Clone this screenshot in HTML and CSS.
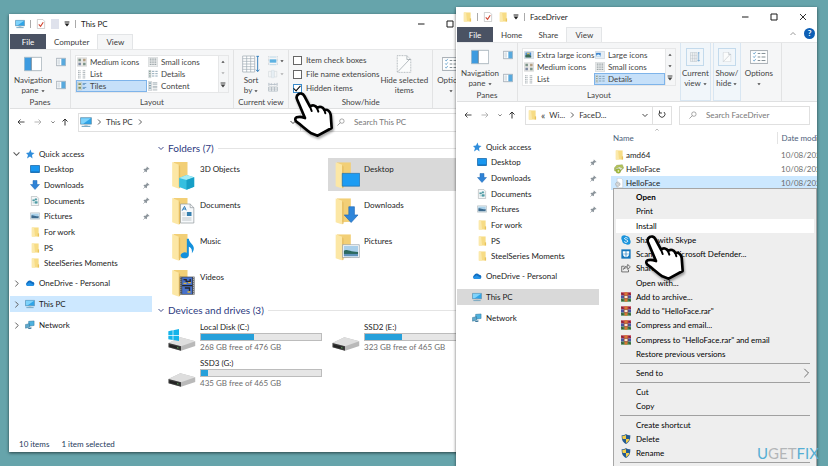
FILE: index.html
```
<!DOCTYPE html>
<html lang="en">
<head>
	<meta charset="UTF-8">
	<title>File Explorer</title>
	<link rel="stylesheet" href="styles.css">
</head>
<body>

<!-- shared icons -->
<svg class="sprite" width="0" height="0" aria-hidden="true">
	<symbol id="i-pc" viewBox="0 0 22 20"><path d="M1 2h20v12H1z" fill="#2fa4e8" stroke="#5f8196"/><path d="M2 3h18L6 13H2z" fill="#7fd3fb"/><path d="M8 14h6v3H8z" fill="#b9c4ca"/><path d="M3 17h16v2H3z" fill="#6fa3bf"/></symbol>
	<symbol id="i-folder" viewBox="0 0 20 22"><path d="M3 1h15v20H3z" fill="#f7dc85"/><path d="M3 1h5l2 20H3z" fill="#fbe9ab"/><path d="M16 14h3v7h-3z" fill="#e9c35c"/></symbol>
	<symbol id="i-check" viewBox="0 0 18 22"><path d="M1 1h12l4 4v16H1z" fill="#fff" stroke="#999"/><path d="M4 12l4 4 6-9" fill="none" stroke="#d0432f" stroke-width="2.4"/></symbol>
	<symbol id="i-star" viewBox="0 0 20 20"><path d="M11 1l2 6 6 1-5 4 1 7-5-4-6 4 2-7-4-4 6-1z" fill="#2f8ddb"/></symbol>
	<symbol id="i-desktop" viewBox="0 0 20 18"><path d="M1 2h18v14H1z" fill="#1997f0" stroke="#1767a8" stroke-width="1.5"/><path d="M2 14h16v2H2z" fill="#0e68b4"/></symbol>
	<symbol id="i-down" viewBox="0 0 20 20"><path d="M6 1h8v8h5l-9 10L1 9h5z" fill="#2f83d6" stroke="#2069b5"/></symbol>
	<symbol id="i-doc" viewBox="0 0 20 22"><path d="M2 1h12l4 4v16H2z" fill="#f4f7f8" stroke="#8d979c"/><path d="M5 8h4v3H5zM5 15h10M10 12h5v4h-5zM10 6h4v3h-4z" fill="#4f9ba5" stroke="#4f9ba5"/></symbol>
	<symbol id="i-pic" viewBox="0 0 22 18"><path d="M1 2h20v14H1z" fill="#e7eff4" stroke="#97a3ab"/><path d="M3 4h16v6H3z" fill="#a9d1ea"/><path d="M3 8c5-2 8 3 16 1v5H3z" fill="#3d6b8e"/></symbol>
	<symbol id="i-cloud" viewBox="0 0 24 16"><path d="M6 15a5 5 0 0 1-1-9 7 7 0 0 1 12-1 5 5 0 0 1 1 10z" fill="#0f6cc0"/><path d="M2 12l9-6 11 7-3 2H6z" fill="#2492e6"/></symbol>
	<symbol id="i-net" viewBox="0 0 22 20"><path d="M8 2l12-1v10l-12 2z" fill="#4fb2df" stroke="#2d6d90"/><path d="M1 9l9-2v8l-9 2z" fill="#5fa9cc" stroke="#2d6d90"/><path d="M7 17l7-2v3l-7 1z" fill="#286a92"/></symbol>
	<symbol id="i-pin" viewBox="0 0 16 16"><path d="M9 1l6 6-2 1-1-1-3 3 0 3-2 1-6-6 2-2h3l3-3-1-1z" fill="#8b949b"/><path d="M5 11l-4 4" stroke="#8b949b" stroke-width="1.6"/></symbol>
	<symbol id="i-back" viewBox="0 0 16 14"><path d="M15 7H2M7 2L2 7l5 5" fill="none" stroke="currentColor" stroke-width="1.8"/></symbol>
	<symbol id="i-fwd" viewBox="0 0 16 14"><path d="M1 7h13M9 2l5 5-5 5" fill="none" stroke="currentColor" stroke-width="1.8"/></symbol>
	<symbol id="i-up" viewBox="0 0 14 16"><path d="M7 15V2M2 7l5-5 5 5" fill="none" stroke="currentColor" stroke-width="2"/></symbol>
	<symbol id="i-cdown" viewBox="0 0 12 12"><path d="M1 4l5 5 5-5" fill="none" stroke="currentColor" stroke-width="1.8"/></symbol>
	<symbol id="i-cup" viewBox="0 0 12 12"><path d="M1 8l5-5 5 5" fill="none" stroke="currentColor" stroke-width="1.5"/></symbol>
	<symbol id="i-cright" viewBox="0 0 12 12"><path d="M4 1l5 5-5 5" fill="none" stroke="currentColor" stroke-width="1.6"/></symbol>
	<symbol id="i-tri" viewBox="0 0 10 10"><path d="M1 3h8L5 8z" fill="currentColor"/></symbol>
	<symbol id="i-triup" viewBox="0 0 10 10"><path d="M1 7h8L5 2z" fill="currentColor"/></symbol>
	<symbol id="i-more" viewBox="0 0 10 10"><path d="M1 1h8v1.500H1zM1 4h8L5 9z" fill="currentColor"/></symbol>
	<symbol id="i-search" viewBox="0 0 18 18"><circle cx="11" cy="7" r="5" fill="none" stroke="currentColor" stroke-width="1.4"/><path d="M7.500 10.500L1 17" stroke="currentColor" stroke-width="1.6"/></symbol>
	<symbol id="i-refresh" viewBox="0 0 16 16"><path d="M12 4a6 6 0 1 1-8 0M3 1v5h5" fill="none" stroke="currentColor" stroke-width="1.8"/></symbol>
	<symbol id="i-min" viewBox="0 0 16 16"><path d="M2 8h13" stroke="currentColor" stroke-width="2"/></symbol>
	<symbol id="i-max" viewBox="0 0 16 16"><path d="M2 2h12v12H2z" fill="none" stroke="currentColor" stroke-width="2"/></symbol>
	<symbol id="i-close" viewBox="0 0 16 16"><path d="M2 2l12 12M14 2L2 14" stroke="currentColor" stroke-width="1.8"/></symbol>
	<symbol id="i-navpane" viewBox="0 0 54 42"><path d="M1 1h52v40H1z" fill="#fff" stroke="#8a98a5" stroke-width="2"/><path d="M2 2h20v38H2z" fill="#3d9be0"/><path d="M22 2v38" stroke="#5f6b75" stroke-width="2"/></symbol>
	<symbol id="i-preview" viewBox="0 0 30 24"><path d="M1 1h28v22H1z" fill="#fff" stroke="#8794a0" stroke-width="2"/><path d="M16 2h12v20H16z" fill="#58a9dd"/><path d="M4 4h8v16H4z" fill="#dce3e8"/></symbol>
	<symbol id="i-large" viewBox="0 0 28 24"><path d="M1 2h26v20H1z" fill="#dde7ef" stroke="#a6b2bd"/><path d="M4 5h16v13H4z" fill="#4789cd"/><path d="M4 13l8-4 8 6v4H4z" fill="#3b6a55"/><path d="M8 6h8v4H8z" fill="#cdbb66"/></symbol>
	<symbol id="i-large2" viewBox="0 0 28 24"><path d="M1 2h26v20H1z" fill="#e6eef5" stroke="#a6b2bd"/><path d="M3 6h13v11H3z" fill="#3f86cf"/><path d="M3 14l6-4 7 4v3H3z" fill="#dff0f8"/></symbol>
	<symbol id="i-medium" viewBox="0 0 28 26"><path d="M1 1h26v24H1z" fill="#e8e8e6" stroke="#b8babb"/><path d="M4 4h7v7H4zM17 15h7v7h-7z" fill="#7c9488"/><path d="M17 4h7v7h-7z" fill="#b39d80"/><path d="M4 15h7v7H4z" fill="#7d8aa3"/></symbol>
	<symbol id="i-small" viewBox="0 0 28 28"><path d="M1 1h26v26H1z" fill="#eeefef" stroke="#aeb2b4"/><path d="M5 6h19M5 11h19M5 16h19M5 21h19" stroke="#8d989c" stroke-width="3" stroke-dasharray="3 2"/></symbol>
	<symbol id="i-list" viewBox="0 0 28 26"><path d="M3 4h8M16 4h8M3 9h8M16 9h8M3 14h8M16 14h8M3 19h8M16 19h8M3 24h8M16 24h8" stroke="#949ea4" stroke-width="2.500" stroke-dasharray="3 1"/></symbol>
	<symbol id="i-details" viewBox="0 0 30 26"><path d="M2 2h7v22H2z" fill="#dfe6e8" stroke="#9aa7ae"/><path d="M12 5h7M22 5h7M12 12h7M22 12h7M12 19h7M22 19h7" stroke="#7997ab" stroke-width="2.500"/><path d="M3 5h5M3 12h5M3 19h5" stroke="#829a8d" stroke-width="3"/></symbol>
	<symbol id="i-tiles" viewBox="0 0 28 26"><path d="M2 2h11v22H2z" fill="#dfe5d9" stroke="#a5aaa5"/><path d="M4 5h7v5H4zM4 15h7v6H4z" fill="#7f8f60"/><path d="M16 6h10M16 9h6M16 17h10M16 20h6" stroke="#4f87ba" stroke-width="2"/></symbol>
	<symbol id="i-content" viewBox="0 0 28 28"><path d="M1 1h9v26H1z" fill="#e4e9eb" stroke="#9ba5ab"/><path d="M13 5h13M13 9h13M13 15h13M13 19h13M13 25h13" stroke="#8c99a2" stroke-width="2"/><path d="M3 6h5M3 13h5M3 20h5" stroke="#7898a6" stroke-width="3"/></symbol>
	<symbol id="i-sort" viewBox="0 0 54 54"><path d="M2 3h36v48H2z" fill="#fff" stroke="#98a4ad" stroke-width="2"/><path d="M2 11h36M2 19h36M2 27h36M2 35h36M2 43h36M14 3v48M26 3v48" stroke="#9eabb4" stroke-width="2"/><path d="M47 3v46M42 44l5 6 5-6M43 4h8" fill="none" stroke="#3c83bd" stroke-width="3"/></symbol>
	<symbol id="i-group" viewBox="0 0 30 30"><path d="M2 1v28M28 1v28" stroke="#a9b4bb" stroke-dasharray="2 2" stroke-width="2"/><path d="M5 10h20v10H5z" fill="#5eb2e2"/><path d="M5 3h20M5 26h20" stroke="#9fc9e3" stroke-width="2"/></symbol>
	<symbol id="i-cols" viewBox="0 0 34 30"><path d="M2 6h28v19H2zM11 6v19M21 6v19" fill="#f6f8f9" stroke="#9aa7b1" stroke-width="2"/><path d="M12 2h9v26h-9z" fill="#d5e6f2" stroke="#829db1"/></symbol>
	<symbol id="i-fit" viewBox="0 0 34 34"><path d="M3 3v10M31 3v10M5 8h9M20 8h9M12 5l3 3-3 3M22 5l-3 3 3 3" fill="none" stroke="#8999a6" stroke-width="2"/><path d="M2 17h30v14H2zM12 17v14M22 17v14M2 24h30" fill="none" stroke="#9ba8b1" stroke-width="2"/></symbol>
	<symbol id="i-hide" viewBox="0 0 46 56"><path d="M2 2h30l12 12v40H2z" fill="#fbfcfc" stroke="#8e979e" stroke-width="2" stroke-dasharray="3 2"/><path d="M32 2v12h12M4 52L42 12" fill="none" stroke="#8e979e" stroke-width="2"/></symbol>
	<symbol id="i-options" viewBox="0 0 56 42"><path d="M1 1h54v40H1z" fill="#fff" stroke="#76818a" stroke-width="2"/><path d="M10 8l3 4 5-7M10 19l3 4 5-7M10 30l3 4 5-7" fill="none" stroke="#3a85bc" stroke-width="2"/><path d="M24 10h8M36 10h12M24 21h8M36 21h12M24 32h8M36 32h12" stroke="#7c888f" stroke-width="3"/></symbol>
	<symbol id="i-bigfolder" viewBox="0 0 50 80"><path d="M6 0h42v72l-40 2z" fill="#f2cf76"/><path d="M2 0l20 8v72L2 73z" fill="#fce7a5"/><path d="M22 8v72l4-3V14z" fill="#e5bd60"/></symbol>
	<symbol id="i-drive" viewBox="0 0 82 44"><path d="M0 20L36 3l45 12v14L38 43 0 33z" fill="#b9b9b9"/><path d="M0 20L36 3l45 12-43 15z" fill="#dedede"/><path d="M0 20l38 10v13L0 33z" fill="#3a3a3a"/><path d="M4 25l29 7v6L4 31z" fill="#222"/><path d="M26 34l5 1" stroke="#7de07c" stroke-width="2"/></symbol>
	<symbol id="i-inf" viewBox="0 0 26 32"><path d="M7 1h13l5 5v25H7z" fill="#fff" stroke="#9ba0a4"/><circle cx="9" cy="20" r="7" fill="#d9dcde" stroke="#8d9498" stroke-width="2" stroke-dasharray="3 1"/><circle cx="9" cy="20" r="2.500" fill="#fff" stroke="#8d9498"/></symbol>
	<symbol id="i-setup" viewBox="0 0 30 28"><path d="M8 3l17-2 4 10-10 10-17-1L1 11z" fill="#b7c65a" stroke="#6d8334"/><path d="M3 14l13-7 10 5-9 9z" fill="#e2e9d2" stroke="#788756"/><circle cx="13" cy="20" r="7" fill="#a9c13c" stroke="#617a25"/><circle cx="13" cy="20" r="2" fill="#fff"/></symbol>
	<symbol id="i-rar" viewBox="0 0 32 30"><path d="M0 0h32v10H0z" fill="#b83045"/><path d="M0 10h32v10H0z" fill="#4a55a5"/><path d="M0 20h32v10H0z" fill="#3b8b4c"/><path d="M11 0h10v30H11z" fill="#d77a35"/><path d="M10 10h12v10H10z" fill="#f6e6cf" stroke="#8c3423" stroke-width="2"/><path d="M2 2l5 6M25 2l5 6M2 22l5 6M25 22l5 6" stroke="#552236" stroke-width="3"/></symbol>
	<symbol id="i-shield" viewBox="0 0 28 30"><path d="M14 0c4 3 8 4 13 4 0 13-2 20-13 26C3 24 1 17 1 4c5 0 9-1 13-4z" fill="#245a92"/><path d="M14 3v12H4C3 12 3 9 3 6c4 0 8-1 11-3zM14 15h10c-1 5-4 9-10 12z" fill="#f5ce47"/></symbol>
	<symbol id="i-hand" viewBox="0 0 126 144"><path d="M16 30C8 14 28 2 37 18L54 50C61 43 71 46 75 54 83 47 93 51 97 60 107 57 114 64 116 74L119 114 77 137 58 130C41 119 27 104 13 95 3 83 18 76 39 84Z" fill="#fff" stroke="#000" stroke-width="8" stroke-linejoin="round"/><path d="M54 50l5 13M75 54l4 11M97 60l3 10" stroke="#000" stroke-width="6" stroke-linecap="round"/></symbol>
</svg>

<main class="desktop">

	<!-- This PC window -->
	<section class="window window-pc">
		<header class="titlebar">
			<svg class="ic10"><use href="#i-pc"/></svg>
			<span class="bar"></span>
			<svg class="ic10"><use href="#i-check"/></svg>
			<span class="blank-doc"></span>
			<svg class="ic6"><use href="#i-more"/></svg>
			<span class="bar"></span>
			<h1>This PC</h1>
			<div class="controls">
				<button type="button" aria-label="Minimize"><svg class="ic8"><use href="#i-min"/></svg></button>
				<button type="button" aria-label="Maximize"><svg class="ic8"><use href="#i-max"/></svg></button>
				<button type="button" aria-label="Close"><svg class="ic8"><use href="#i-close"/></svg></button>
			</div>
		</header>
		<nav class="tabs">
			<button type="button" class="file">File</button>
			<button type="button">Computer</button>
			<button type="button" class="active">View</button>
		</nav>
		<div class="ribbon">
			<div class="group">
				<div class="group-body panes">
					<button type="button" class="big"><svg class="big-icon"><use href="#i-navpane"/></svg><span>Navigation<br>pane <svg class="ic4"><use href="#i-tri"/></svg></span></button>
					<div class="small-icons two">
						<button type="button" aria-label="Preview pane"><svg class="ic10"><use href="#i-preview"/></svg></button>
						<button type="button" aria-label="Details pane"><svg class="ic10"><use href="#i-preview"/></svg></button>
					</div>
				</div>
				<div class="group-name">Panes</div>
			</div>
			<div class="group">
				<div class="group-body">
					<div class="gallery">
						<button type="button"><svg class="ic10"><use href="#i-medium"/></svg>Medium icons</button>
						<button type="button"><svg class="ic10"><use href="#i-small"/></svg>Small icons</button>
						<button type="button"><svg class="ic10"><use href="#i-list"/></svg>List</button>
						<button type="button"><svg class="ic10"><use href="#i-details"/></svg>Details</button>
						<button type="button" class="selected"><svg class="ic10"><use href="#i-tiles"/></svg>Tiles</button>
						<button type="button"><svg class="ic10"><use href="#i-content"/></svg>Content</button>
					</div>
					<div class="spinner">
						<button type="button" aria-label="Up"><svg class="ic4"><use href="#i-triup"/></svg></button>
						<button type="button" aria-label="Down" class="off"><svg class="ic4"><use href="#i-tri"/></svg></button>
						<button type="button" aria-label="More"><svg class="ic6"><use href="#i-more"/></svg></button>
					</div>
				</div>
				<div class="group-name">Layout</div>
			</div>
			<div class="group">
				<div class="group-body view-tools">
					<button type="button" class="big"><svg class="big-icon"><use href="#i-sort"/></svg><span>Sort<br>by <svg class="ic4"><use href="#i-tri"/></svg></span></button>
					<div class="small-icons">
						<button type="button" aria-label="Group by"><svg class="ic10"><use href="#i-group"/></svg><svg class="ic4"><use href="#i-tri"/></svg></button>
						<button type="button" aria-label="Add columns" class="off"><svg class="ic10"><use href="#i-cols"/></svg><svg class="ic4"><use href="#i-tri"/></svg></button>
						<button type="button" aria-label="Size columns"><svg class="ic10"><use href="#i-fit"/></svg></button>
					</div>
				</div>
				<div class="group-name">Current view</div>
			</div>
			<div class="group">
				<div class="group-body show-tools">
					<div class="checks">
						<label><input type="checkbox">Item check boxes</label>
						<label><input type="checkbox">File name extensions</label>
						<label><input type="checkbox" checked>Hidden items</label>
					</div>
					<button type="button" class="big"><svg class="big-icon"><use href="#i-hide"/></svg><span>Hide selected<br>items</span></button>
				</div>
				<div class="group-name">Show/hide</div>
			</div>
			<div class="group">
				<div class="group-body">
					<button type="button" class="big"><svg class="big-icon"><use href="#i-options"/></svg><span>Options<br><svg class="ic4"><use href="#i-tri"/></svg></span></button>
				</div>
			</div>
		</div>
		<div class="address-row">
			<div class="history">
				<button type="button" aria-label="Back"><svg class="ic8"><use href="#i-back"/></svg></button>
				<button type="button" aria-label="Forward" class="off"><svg class="ic8"><use href="#i-fwd"/></svg></button>
				<button type="button" aria-label="Recent" class="narrow"><svg class="ic4"><use href="#i-cdown"/></svg></button>
				<button type="button" aria-label="Up" class="narrow"><svg class="ic8"><use href="#i-up"/></svg></button>
			</div>
			<div class="address">
				<svg class="ic12"><use href="#i-pc"/></svg>
				<svg class="ic6"><use href="#i-cright"/></svg>
				<span>This PC</span>
				<svg class="ic6"><use href="#i-cright"/></svg>
				<button type="button" class="drop" aria-label="Previous locations"><svg class="ic6"><use href="#i-cdown"/></svg></button>
				<button type="button" class="refresh" aria-label="Refresh"><svg class="ic8"><use href="#i-refresh"/></svg></button>
			</div>
			<label class="search"><svg class="ic8"><use href="#i-search"/></svg><input type="text" placeholder="Search This PC" aria-label="Search This PC"></label>
		</div>
		<div class="content">
			<nav class="tree">
				<ul class="quick">
					<li><svg class="twist"><use href="#i-cdown"/></svg><svg class="ic10"><use href="#i-star"/></svg><a href="#">Quick access</a></li>
					<li class="sub"><svg class="ic10"><use href="#i-desktop"/></svg><a href="#">Desktop</a><svg class="pin"><use href="#i-pin"/></svg></li>
					<li class="sub"><svg class="ic10"><use href="#i-down"/></svg><a href="#">Downloads</a><svg class="pin"><use href="#i-pin"/></svg></li>
					<li class="sub"><svg class="ic10"><use href="#i-doc"/></svg><a href="#">Documents</a><svg class="pin"><use href="#i-pin"/></svg></li>
					<li class="sub"><svg class="ic10"><use href="#i-pic"/></svg><a href="#">Pictures</a><svg class="pin"><use href="#i-pin"/></svg></li>
					<li class="sub"><svg class="ic10"><use href="#i-folder"/></svg><a href="#">For work</a></li>
					<li class="sub"><svg class="ic10"><use href="#i-folder"/></svg><a href="#">PS</a></li>
					<li class="sub"><svg class="ic10"><use href="#i-folder"/></svg><a href="#">SteelSeries Moments</a></li>
				</ul>
				<ul class="roots">
					<li><svg class="twist"><use href="#i-cright"/></svg><svg class="ic10"><use href="#i-cloud"/></svg><a href="#">OneDrive - Personal</a></li>
					<li class="current"><svg class="twist"><use href="#i-cright"/></svg><svg class="ic10"><use href="#i-pc"/></svg><a href="#">This PC</a></li>
					<li><svg class="twist"><use href="#i-cright"/></svg><svg class="ic10"><use href="#i-net"/></svg><a href="#">Network</a></li>
				</ul>
			</nav>
			<div class="files">
				<h2><svg class="ic6"><use href="#i-cdown"/></svg>Folders (7)</h2>
				<div class="tiles">
					<div class="tile">
						<svg class="folder-icon" viewBox="0 0 72 84"><use href="#i-bigfolder" width="50" height="80"/><path d="M23 48l22-9 23 7v28l-23 9-22-8z" fill="#35bfe0"/><path d="M23 48l22-9 23 7-23 8z" fill="#a4ecf6"/><path d="M45 54l23-8v28l-23 9z" fill="#179fc6"/></svg>
						<span>3D Objects</span>
					</div>
					<div class="tile selected">
						<svg class="folder-icon" viewBox="0 0 76 84"><use href="#i-bigfolder" width="50" height="80"/><path d="M22 34h53v39H22z" fill="#1d9cf3" stroke="#1c6baa" stroke-width="2"/></svg>
						<span>Desktop</span>
					</div>
					<div class="tile">
						<svg class="folder-icon" viewBox="0 0 72 84"><use href="#i-bigfolder" width="50" height="80"/><path d="M27 18h29l11 11v46H27z" fill="#f7f9fb" stroke="#8d9499" stroke-width="2"/><path d="M56 18v11h11" fill="none" stroke="#8d9499" stroke-width="2"/><path d="M32 38l7-13 5 12M34 33h8" fill="none" stroke="#2e7cb8" stroke-width="3"/><path d="M46 42h14v12H46z" fill="#367fae"/><path d="M32 45h10M32 51h10M32 60h28M32 66h28" stroke="#a3adb4" stroke-width="2"/></svg>
						<span>Documents</span>
					</div>
					<div class="tile">
						<svg class="folder-icon" viewBox="0 0 76 84"><use href="#i-bigfolder" width="50" height="80"/><path d="M42 26h17v25h11L49 74 28 51h14z" fill="#2f86da" stroke="#2068b5" stroke-width="2"/></svg>
						<span>Downloads</span>
					</div>
					<div class="tile">
						<svg class="folder-icon" viewBox="0 0 72 84"><use href="#i-bigfolder" width="50" height="80"/><path d="M46 14h6c1 12 14 16 15 28 0 7-3 12-6 16 2-14-4-18-9-20v24c0 8-7 11-14 11-14-1-15-16 2-18l6 1z" fill="#1390dc"/></svg>
						<span>Music</span>
					</div>
					<div class="tile">
						<svg class="folder-icon" viewBox="0 0 76 84"><use href="#i-bigfolder" width="50" height="80"/><path d="M23 32h51v39H23z" fill="#f5f8fa" stroke="#8f9ca5" stroke-width="2"/><path d="M27 36h43v31H27z" fill="#a9cfea"/><path d="M27 50c8-6 14 2 43 4v6H27z" fill="#2c6a5f"/><path d="M27 60h43v7H27z" fill="#5f93bb"/></svg>
						<span>Pictures</span>
					</div>
					<div class="tile">
						<svg class="folder-icon" viewBox="0 0 72 84"><use href="#i-bigfolder" width="50" height="80"/><path d="M25 20h44v54H25z" fill="#3b3f45"/><path d="M28 22v52M66 22v52" stroke="#e5e6e7" stroke-width="3" stroke-dasharray="3 3"/><path d="M32 22h30v50H32z" fill="#4671cb"/><path d="M32 47h30M36 29h8v5h12v-7M40 54h14v9" fill="none" stroke="#25262b" stroke-width="4"/><path d="M36 38h9v4h-9zM50 36h8v4h-8zM48 64h9v4h-9z" fill="#dcb33f"/></svg>
						<span>Videos</span>
					</div>
				</div>
				<h2><svg class="ic6"><use href="#i-cdown"/></svg>Devices and drives (3)</h2>
				<div class="tiles drives">
					<div class="tile drive">
						<svg class="drive-icon" viewBox="0 0 82 66"><use href="#i-drive" y="22" width="82" height="44"/><path d="M0 7l13-3v14H0zM15 4l17-4v18H15zM0 20h13v13L0 31zM15 20h17v16l-17-3z" fill="#15b4ea"/></svg>
						<div class="info"><span>Local Disk (C:)</span><div class="meter"><i style="width:44%"></i></div><small>268 GB free of 476 GB</small></div>
					</div>
					<div class="tile drive">
						<svg class="drive-icon" viewBox="0 0 82 66"><use href="#i-drive" y="22" width="82" height="44"/></svg>
						<div class="info"><span>SSD2 (E:)</span><div class="meter"><i style="width:31%"></i></div><small>323 GB free of 465 GB</small></div>
					</div>
					<div class="tile drive">
						<svg class="drive-icon" viewBox="0 0 82 66"><use href="#i-drive" y="22" width="82" height="44"/></svg>
						<div class="info"><span>SSD3 (G:)</span><div class="meter"><i style="width:6%"></i></div><small>435 GB free of 465 GB</small></div>
					</div>
				</div>
			</div>
		</div>
		<footer class="status"><span>10 items</span><span>1 item selected</span></footer>
	</section>

	<!-- FaceDriver window -->
	<section class="window window-driver">
		<header class="titlebar">
			<svg class="ic10"><use href="#i-folder"/></svg>
			<span class="bar"></span>
			<svg class="ic10"><use href="#i-check"/></svg>
			<svg class="ic10"><use href="#i-folder"/></svg>
			<svg class="ic6"><use href="#i-more"/></svg>
			<span class="bar"></span>
			<h1>FaceDriver</h1>
			<div class="controls">
				<button type="button" aria-label="Minimize"><svg class="ic8"><use href="#i-min"/></svg></button>
				<button type="button" aria-label="Maximize"><svg class="ic8"><use href="#i-max"/></svg></button>
				<button type="button" aria-label="Close"><svg class="ic8"><use href="#i-close"/></svg></button>
			</div>
		</header>
		<nav class="tabs">
			<button type="button" class="file">File</button>
			<button type="button">Home</button>
			<button type="button">Share</button>
			<button type="button" class="active">View</button>
			<svg class="collapse ic6"><use href="#i-cup"/></svg>
			<a href="#" class="help">?</a>
		</nav>
		<div class="ribbon">
			<div class="group">
				<div class="group-body panes">
					<button type="button" class="big"><svg class="big-icon"><use href="#i-navpane"/></svg><span>Navigation<br>pane <svg class="ic4"><use href="#i-tri"/></svg></span></button>
					<div class="small-icons two">
						<button type="button" aria-label="Preview pane"><svg class="ic10"><use href="#i-preview"/></svg></button>
						<button type="button" aria-label="Details pane"><svg class="ic10"><use href="#i-preview"/></svg></button>
					</div>
				</div>
				<div class="group-name">Panes</div>
			</div>
			<div class="group last">
				<div class="group-body">
					<div class="gallery">
						<button type="button"><svg class="ic10"><use href="#i-large"/></svg>Extra large icons</button>
						<button type="button"><svg class="ic10"><use href="#i-large2"/></svg>Large icons</button>
						<button type="button"><svg class="ic10"><use href="#i-medium"/></svg>Medium icons</button>
						<button type="button"><svg class="ic10"><use href="#i-small"/></svg>Small icons</button>
						<button type="button"><svg class="ic10"><use href="#i-list"/></svg>List</button>
						<button type="button" class="selected"><svg class="ic10"><use href="#i-details"/></svg>Details</button>
					</div>
					<div class="spinner">
						<button type="button" aria-label="Up"><svg class="ic4"><use href="#i-triup"/></svg></button>
						<button type="button" aria-label="Down"><svg class="ic4"><use href="#i-tri"/></svg></button>
						<button type="button" aria-label="More"><svg class="ic6"><use href="#i-more"/></svg></button>
					</div>
				</div>
				<div class="group-name">Layout</div>
			</div>
			<div class="collapsed">
				<button type="button" class="big framed"><svg class="big-icon"><use href="#i-sort"/></svg><span>Current<br>view <svg class="ic4"><use href="#i-tri"/></svg></span></button>
				<button type="button" class="big framed"><svg class="big-icon"><use href="#i-hide"/></svg><span>Show/<br>hide <svg class="ic4"><use href="#i-tri"/></svg></span></button>
				<button type="button" class="big"><svg class="big-icon"><use href="#i-options"/></svg><span>Options<br><svg class="ic4"><use href="#i-tri"/></svg></span></button>
			</div>
		</div>
		<div class="address-row">
			<div class="history">
				<button type="button" aria-label="Back"><svg class="ic8"><use href="#i-back"/></svg></button>
				<button type="button" aria-label="Forward" class="off"><svg class="ic8"><use href="#i-fwd"/></svg></button>
				<button type="button" aria-label="Recent" class="narrow"><svg class="ic4"><use href="#i-cdown"/></svg></button>
				<button type="button" aria-label="Up" class="narrow"><svg class="ic8"><use href="#i-up"/></svg></button>
			</div>
			<div class="address">
				<svg class="ic10"><use href="#i-folder"/></svg>
				<span class="back-mark">«</span>
				<span>Wi...</span>
				<svg class="ic6"><use href="#i-cright"/></svg>
				<span>FaceD...</span>
				<button type="button" class="drop" aria-label="Previous locations"><svg class="ic6"><use href="#i-cdown"/></svg></button>
				<button type="button" class="refresh" aria-label="Refresh"><svg class="ic8"><use href="#i-refresh"/></svg></button>
			</div>
			<label class="search"><svg class="ic8"><use href="#i-search"/></svg><input type="text" placeholder="Search FaceDriver" aria-label="Search FaceDriver"></label>
		</div>
		<div class="content">
			<nav class="tree">
				<ul class="quick">
					<li><span class="twist"></span><svg class="ic10"><use href="#i-star"/></svg><a href="#">Quick access</a></li>
					<li class="sub"><svg class="ic10"><use href="#i-desktop"/></svg><a href="#">Desktop</a><svg class="pin"><use href="#i-pin"/></svg></li>
					<li class="sub"><svg class="ic10"><use href="#i-down"/></svg><a href="#">Downloads</a><svg class="pin"><use href="#i-pin"/></svg></li>
					<li class="sub"><svg class="ic10"><use href="#i-doc"/></svg><a href="#">Documents</a><svg class="pin"><use href="#i-pin"/></svg></li>
					<li class="sub"><svg class="ic10"><use href="#i-pic"/></svg><a href="#">Pictures</a><svg class="pin"><use href="#i-pin"/></svg></li>
					<li class="sub"><svg class="ic10"><use href="#i-folder"/></svg><a href="#">For work</a></li>
					<li class="sub"><svg class="ic10"><use href="#i-folder"/></svg><a href="#">PS</a></li>
					<li class="sub"><svg class="ic10"><use href="#i-folder"/></svg><a href="#">SteelSeries Moments</a></li>
				</ul>
				<ul class="roots">
					<li><span class="twist"></span><svg class="ic10"><use href="#i-cloud"/></svg><a href="#">OneDrive - Personal</a></li>
					<li class="current"><span class="twist"></span><svg class="ic10"><use href="#i-pc"/></svg><a href="#">This PC</a></li>
					<li><span class="twist"></span><svg class="ic10"><use href="#i-net"/></svg><a href="#">Network</a></li>
				</ul>
			</nav>
			<div class="list">
				<svg class="sort-mark"><use href="#i-cup"/></svg>
				<table>
					<thead>
						<tr><th>Name</th><th class="date">Date modified</th></tr>
					</thead>
					<tbody>
						<tr><td><div><svg class="ic10"><use href="#i-folder"/></svg>amd64</div></td><td class="date">10/08/2022</td></tr>
						<tr><td><div><svg class="ic10"><use href="#i-setup"/></svg>HelloFace</div></td><td class="date">10/08/2022</td></tr>
						<tr class="selected"><td><div><svg class="ic10"><use href="#i-inf"/></svg>HelloFace</div></td><td class="date">10/08/2022</td></tr>
					</tbody>
				</table>
			</div>
		</div>
	</section>

	<!-- context menu -->
	<div class="menu" role="menu">
		<div class="menu-main">
			<button type="button"><b>Open</b></button>
			<button type="button">Print</button>
			<button type="button" class="hover">Install</button>
			<button type="button"><svg viewBox="0 0 28 28"><circle cx="9" cy="9" r="8" fill="#1b94dc"/><circle cx="19" cy="19" r="8" fill="#1b94dc"/><circle cx="14" cy="14" r="11" fill="#1b94dc"/><path d="M19 10c-2-4-10-3-9 1 1 3 9 2 9 6 0 4-8 5-10 1" fill="none" stroke="#fff" stroke-width="2.500"/></svg>Share with Skype</button>
			<button type="button"><svg viewBox="0 0 28 28"><path d="M1 1h26v26H1z" fill="#1677bd"/><path d="M5 6h8v7H5zM15 6h8v7h-8zM5 15h8v8c-5-1-7-4-8-8zM15 15h8c-1 4-3 7-8 8z" fill="#fff"/></svg>Scan with Microsoft Defender...</button>
			<button type="button"><svg viewBox="0 0 28 28"><path d="M10 9H2v16h19v-6" fill="none" stroke="#444" stroke-width="2"/><path d="M7 18c1-7 6-9 12-9V4l7 7-7 7v-5c-6 0-9 1-12 5z" fill="none" stroke="#444" stroke-width="2"/></svg>Share</button>
			<button type="button">Open with...</button>
			<button type="button"><svg><use href="#i-rar"/></svg>Add to archive...</button>
			<button type="button"><svg><use href="#i-rar"/></svg>Add to "HelloFace.rar"</button>
			<button type="button"><svg><use href="#i-rar"/></svg>Compress and email...</button>
			<button type="button"><svg><use href="#i-rar"/></svg>Compress to "HelloFace.rar" and email</button>
			<button type="button">Restore previous versions</button>
		</div>
		<hr>
		<button type="button">Send to<svg class="more" viewBox="0 0 12 12"><path d="M4 1l5 5-5 5" fill="none" stroke="#555"/></svg></button>
		<hr>
		<button type="button">Cut</button>
		<button type="button">Copy</button>
		<hr>
		<button type="button">Create shortcut</button>
		<button type="button"><svg><use href="#i-shield"/></svg>Delete</button>
		<button type="button"><svg><use href="#i-shield"/></svg>Rename</button>
		<hr>
	</div>

	<svg class="hand hand-check"><use href="#i-hand"/></svg>
	<svg class="hand hand-install"><use href="#i-hand"/></svg>
	<div class="brand"><b>U</b>GET<b>FIX</b></div>
</main>

</body>
</html>
```
FILE: styles.css
```
* {
	box-sizing: border-box;
}
body {
	margin: 0;
	background: #66a4ab;
	color: #1b1b1b;
	font: 8px/10px Lato, "Open Sans", sans-serif;
}
button, input {
	margin: 0;
	padding: 0;
	border: 0;
	background: none;
	color: inherit;
	font: inherit;
}
a {
	color: inherit;
	text-decoration: none;
}
ul {
	margin: 0;
	padding: 0;
	list-style: none;
}
svg {
	flex: none;
}
.sprite {
	position: absolute;
}
.ic4 { width: 4px; height: 4px; }
.ic6 { width: 6px; height: 6px; }
.ic8 { width: 8px; height: 8px; }
.ic10 { width: 10px; height: 10px; }
.ic12 { width: 12px; height: 12px; }

.desktop {
	position: relative;
	height: 100vh;
	overflow: hidden;
}

/* windows */
.window {
	position: absolute;
	display: flex;
	flex-direction: column;
	overflow: hidden;
	border-left: 1px solid #fff;
	background: #fff;
	box-shadow: 0 1px 3px rgba(0, 0, 0, .6);
}
.window-pc {
	top: 14px;
	left: 9px;
	right: 335px;
	bottom: 14px;
}
.window-driver {
	top: 7px;
	left: 456px;
	right: 11px;
	bottom: -20px;
}
.titlebar {
	display: flex;
	align-items: center;
	gap: 5px;
	height: 20px;
	padding-left: 5px;
}
.titlebar h1 {
	margin: 0;
	font-size: 8px;
	font-weight: normal;
}
.bar {
	width: 1px;
	height: 8px;
	background: #aaa;
}
.blank-doc {
	width: 8px;
	height: 10px;
	background: #dfe2ec;
}
.controls {
	display: flex;
	margin-left: auto;
}
.controls button {
	display: flex;
	justify-content: center;
	width: 29px;
}

/* ribbon */
.tabs {
	display: flex;
	height: 15px;
	color: #3c3c3c;
}
.tabs button {
	min-width: 36px;
	padding: 0 7px;
	border: 1px solid transparent;
	border-bottom: 0;
}
.tabs .file {
	background: #4a5263;
	color: #fff;
}
.tabs .active {
	border-color: #e3e5e7;
	background: #f5f6f7;
}
.collapse {
	margin: 4px 8px 0 auto;
	color: #777;
}
.help {
	width: 11px;
	height: 11px;
	margin: 1px 2px 0 0;
	border-radius: 50%;
	background: #0e5fb5;
	color: #fff;
	font-weight: bold;
	text-align: center;
}
.ribbon {
	display: flex;
	height: 60px;
	border-top: 1px solid #e6e7e8;
	border-bottom: 1px solid #dfe0e1;
	background: #f5f6f7;
	color: #444;
}
.group {
	display: flex;
	flex-direction: column;
	flex: none;
	padding: 5px 4px 0;
	border-right: 1px solid #e2e3e4;
}
.group.last {
	border-right: 0;
}
.group-body {
	display: flex;
	height: 38px;
}
.group-name {
	margin-top: 4px;
	text-align: center;
}
.big {
	display: flex;
	flex-direction: column;
	align-items: center;
	line-height: 10px;
}
.big-icon {
	width: 18px;
	height: 18px;
	margin-bottom: 2px;
}
.panes {
	gap: 4px;
}
.small-icons {
	display: flex;
	flex-direction: column;
	justify-content: space-between;
}
.small-icons button {
	display: flex;
	align-items: center;
	gap: 2px;
	height: 12px;
}
.small-icons.two {
	padding: 1px 0 2px;
}
.gallery {
	display: grid;
	grid-template-columns: 71px 71px;
	grid-auto-rows: 1fr;
	border: 1px solid #e6e7e8;
	background: #fff;
}
.gallery button {
	display: flex;
	align-items: center;
	gap: 3px;
	border: 1px solid transparent;
	white-space: nowrap;
}
.gallery .selected {
	border-color: #7eb4ea;
	background: #c6e0f9;
}
.spinner {
	display: grid;
	width: 10px;
	border: 1px solid #e6e7e8;
	border-left: 0;
}
.spinner button {
	display: flex;
	align-items: center;
	justify-content: center;
}
.off {
	opacity: .4;
}
.view-tools {
	gap: 8px;
	padding-left: 4px;
}
.show-tools {
	gap: 1px;
}
.checks {
	display: flex;
	flex-direction: column;
	justify-content: space-between;
}
.checks label {
	display: flex;
	align-items: center;
	gap: 4px;
}
.checks input {
	appearance: none;
	width: 9px;
	height: 9px;
	border: 1px solid #666;
	background: #fff;
}
.checks input:checked {
	border-color: #3b8bcb;
}
.checks input:checked::before {
	content: "";
	display: block;
	width: 3px;
	height: 6px;
	margin: -1px auto 0;
	border: solid #000;
	border-width: 0 1px 1px 0;
	transform: rotate(42deg);
}
.collapsed {
	display: flex;
	gap: 2px;
	padding-right: 6px;
	border-right: 1px solid #e2e3e4;
}
.collapsed .big {
	min-width: 28px;
	padding: 5px 1px 0;
	border: 1px solid transparent;
	border-top: 0;
}
.collapsed .framed {
	border-color: #d8e6f2;
	background: #f1f6fa;
}
.framed .big-icon {
	padding: 3px;
	border: 1px solid #c3daec;
}

/* address bar */
.address-row {
	display: flex;
	align-items: center;
	gap: 7px;
	height: 26px;
	padding-right: 7px;
	color: #333;
}
.history {
	display: flex;
	width: 61px;
	padding-left: 2px;
}
.history button {
	display: flex;
	align-items: center;
	justify-content: center;
	width: 20px;
}
.history .narrow {
	width: 14px;
}
.address, .search {
	display: flex;
	align-items: center;
	gap: 5px;
	height: 19px;
	border: 1px solid #e0e0e0;
}
.address {
	flex: 1;
	gap: 4px;
	padding-left: 1px;
}
.back-mark {
	font-size: 10px;
}
.drop {
	margin-left: auto;
}
.refresh {
	align-self: stretch;
	width: 19px;
	border-left: 1px solid #e0e0e0;
}
.search {
	width: 131px;
	padding-left: 9px;
	color: #777;
}
.window-pc .search {
	width: 159px;
}
.search input {
	width: 100%;
	min-width: 0;
	padding-left: 4px;
	outline: 0;
}
.search input::placeholder {
	color: #777;
	opacity: 1;
}

/* navigation tree */
.content {
	display: flex;
	flex: 1;
	min-height: 0;
}
.tree {
	flex: none;
	width: 142px;
	padding-top: 11px;
}
.quick {
	display: grid;
	grid-auto-rows: 1fr;
	height: 125px;
}
.tree li {
	display: flex;
	align-items: center;
	gap: 4px;
	padding-left: 3px;
}
.tree .sub {
	padding-left: 20px;
}
.twist {
	width: 7px;
	height: 7px;
	margin-right: 1px;
	color: #555;
}
.pin {
	width: 7px;
	height: 7px;
	margin: 0 2px 0 auto;
}
.roots {
	display: grid;
	gap: 5px;
	margin-top: 4px;
}
.roots li {
	height: 16px;
}
.current {
	background: #cde8ff;
}
.window-driver .current {
	background: #d9d9d9;
}

/* folders and drives */
.files {
	flex: 1;
	min-width: 0;
	padding: 7px 0 0 6px;
}
.files h2 {
	display: flex;
	align-items: center;
	gap: 4px;
	margin: 0;
	color: #2c3a80;
	font-size: 10px;
	font-weight: normal;
	line-height: 12px;
}
.files h2::after {
	content: "";
	flex: 1;
	height: 1px;
	background: #e4e4e4;
}
.tiles {
	display: grid;
	grid-template-columns: 161px 161px;
	gap: 3px;
	padding: 4px 0 5px 6px;
}
.tile {
	display: flex;
	gap: 4px;
	height: 33px;
	padding: 4px 0 0 7px;
}
.tile.selected {
	background: #d9d9d9;
}
.tile > span {
	padding-top: 2px;
}
.folder-icon {
	width: 25px;
	height: 28px;
}
.drive-icon {
	width: 28px;
	height: 22px;
	margin-top: 7px;
}
.tile.drive {
	padding: 2px 0 0 4px;
}
.info {
	display: flex;
	flex-direction: column;
	width: 122px;
}
.info small {
	color: #6d6d6d;
	font-size: 8px;
	line-height: 12px;
}
.meter {
	height: 9px;
	margin-top: 1px;
	border: 1px solid #bcbcbc;
	background: #e6e6e6;
}
.meter i {
	display: block;
	height: 100%;
	background: #26a0da;
}
.status {
	display: flex;
	gap: 12px;
	height: 17px;
	padding: 4px 9px 0;
	color: #1e395b;
}

/* file list */
.list {
	display: flex;
	flex-direction: column;
	flex: 1;
	min-width: 0;
	padding-left: 12px;
	overflow: hidden;
}
.sort-mark {
	width: 6px;
	height: 4px;
	margin-left: 43px;
	color: #777;
}
.list table {
	width: 100%;
	table-layout: fixed;
	border-collapse: collapse;
}
.list th {
	height: 12px;
	padding: 0 2px;
	color: #4c607a;
	font-weight: normal;
	text-align: left;
	white-space: nowrap;
}
.list td {
	height: 14px;
	padding: 0 3px;
}
.list thead::after {
	content: "";
	display: block;
	height: 4px;
}
.list .date {
	width: 40px;
	padding: 0 0 0 4px;
	overflow: hidden;
	color: #6d6d6d;
	white-space: nowrap;
}
.list th.date {
	border-left: 1px solid #e3e3e3;
	color: #4c607a;
}
.list td div {
	display: flex;
	align-items: center;
	gap: 2px;
}
.list .selected {
	background: #cce8ff;
}

/* context menu */
.menu {
	position: absolute;
	top: 188px;
	left: 613px;
	right: 11px;
	bottom: -20px;
	padding: 1px 2px;
	border: 1px solid #a6a6a6;
	background: #eee;
	color: #000;
}
.menu-main {
	display: grid;
	grid-auto-rows: 1fr;
	height: 171px;
}
.menu button {
	display: flex;
	align-items: center;
	width: 100%;
	height: 14px;
	padding-left: 20px;
	white-space: nowrap;
}
.menu button.hover {
	background: #fff;
}
.menu svg {
	width: 10px;
	height: 10px;
	margin: 0 5px 0 -15px;
}
.menu .more {
	margin: 0 3px 0 auto;
}
.menu hr {
	height: 1px;
	margin: 2px 4px;
	border: 0;
	background: #a0a0a0;
}

/* overlays */
.hand {
	position: absolute;
	width: 42px;
	height: 48px;
	filter: drop-shadow(1px 2px 1px rgba(0, 0, 0, .35));
}
.hand-check {
	top: 90px;
	left: 292px;
}
.hand-install {
	top: 233px;
	left: 643px;
}
.brand {
	position: absolute;
	right: 9px;
	bottom: 3px;
	color: #b3b6b8;
	font: 15px/20px Lato, sans-serif;
}
.brand b {
	color: #55aed4;
	font-weight: normal;
}
```
